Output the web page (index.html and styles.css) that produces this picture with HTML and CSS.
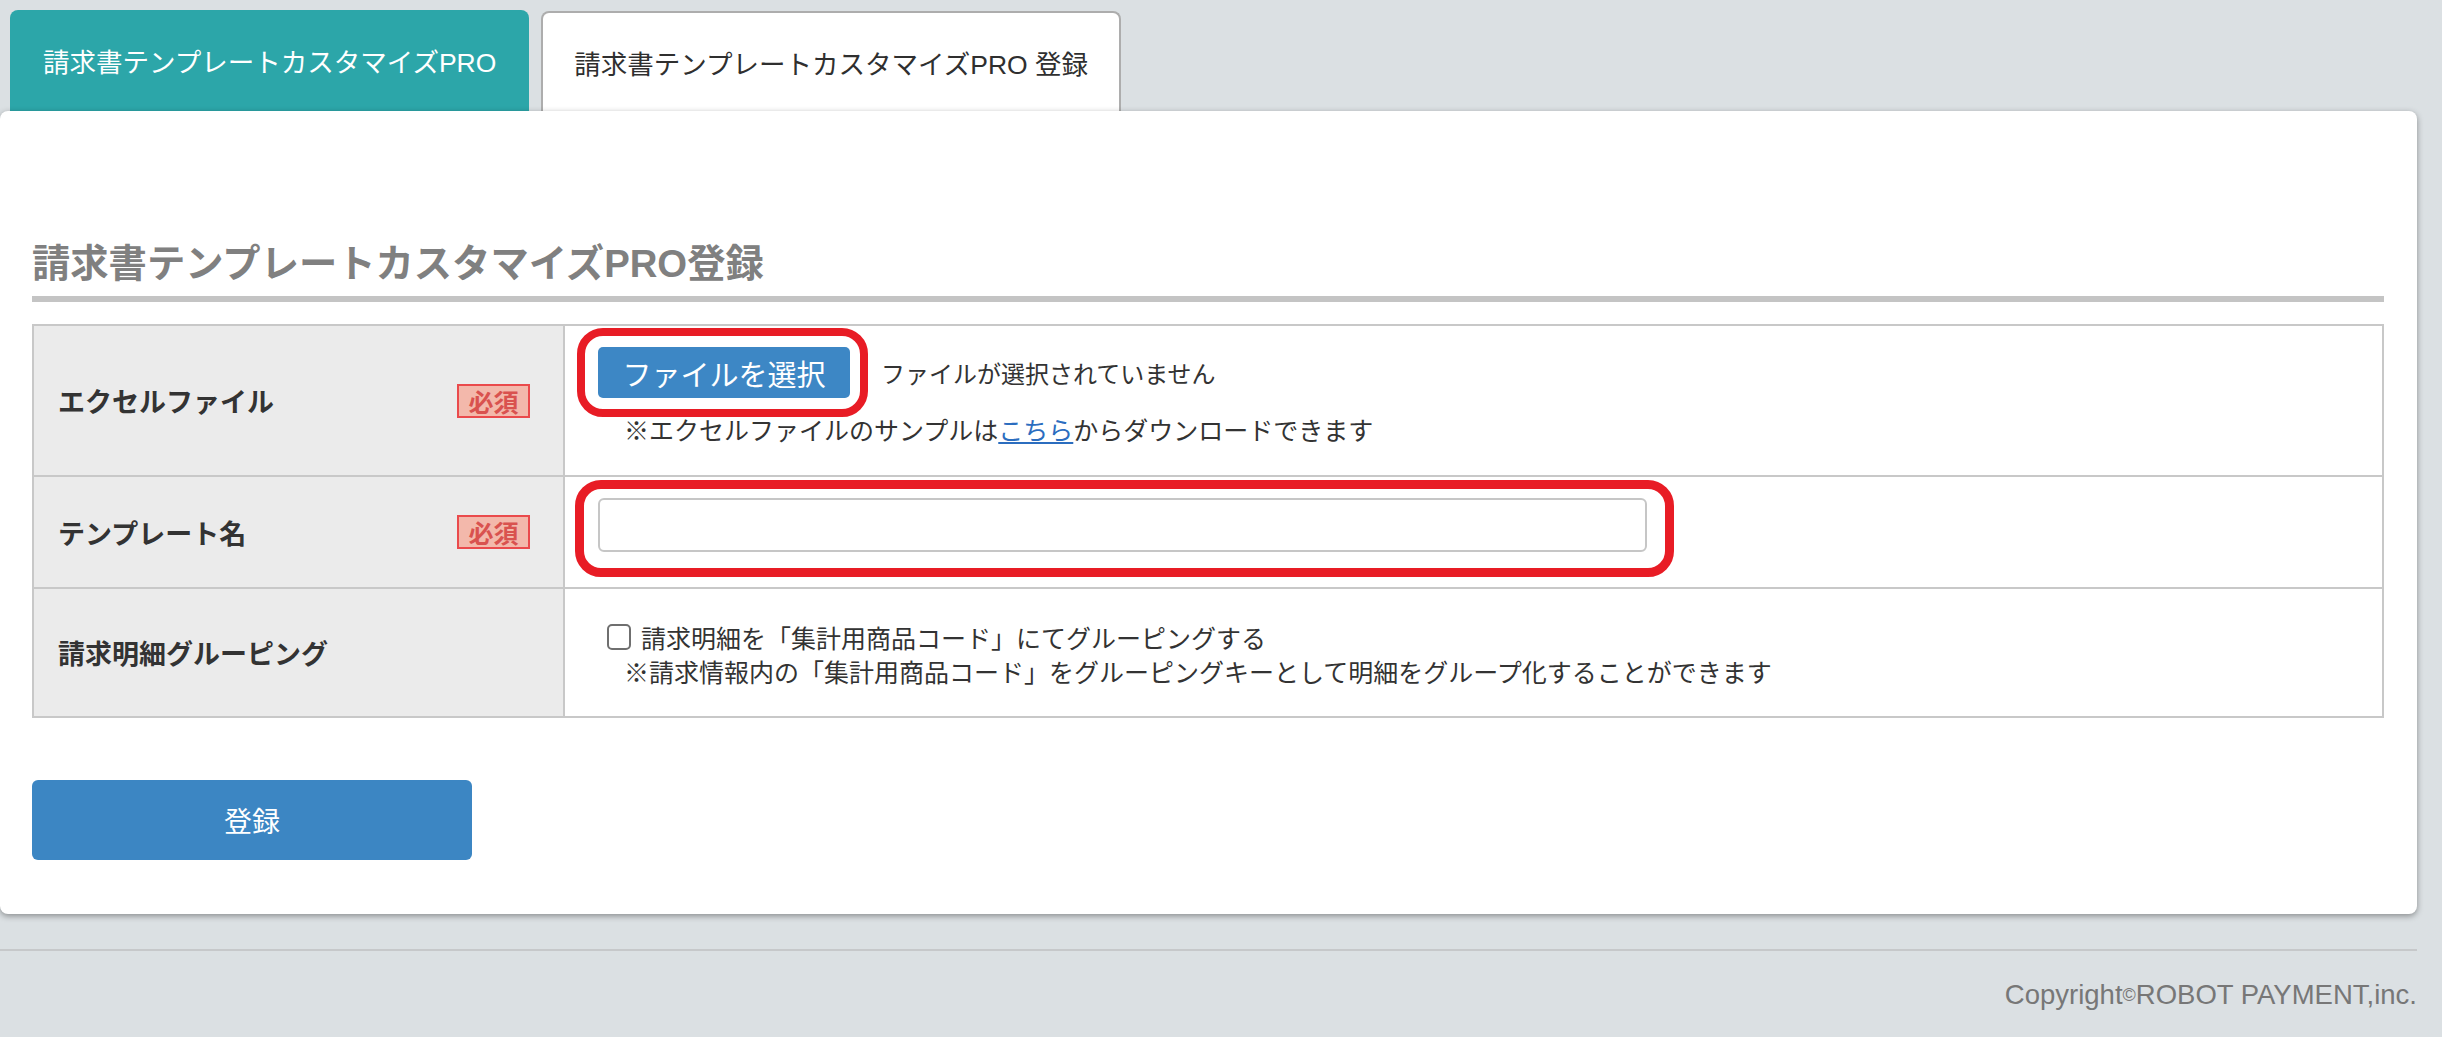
FILE: index.html
```html
<!DOCTYPE html>
<html lang="ja">
<head>
<meta charset="utf-8">
<title>請求書テンプレートカスタマイズPRO 登録</title>
<link rel="stylesheet" href="styles.css">
</head>
<body>
<div class="page">
  <nav class="tabs">
    <a class="tab tab-link">請求書テンプレートカスタマイズPRO</a>
    <a class="tab tab-active">請求書テンプレートカスタマイズPRO 登録</a>
  </nav>
  <main class="panel">
    <h1 class="title">請求書テンプレートカスタマイズPRO登録</h1>
    <table class="form-table">
      <colgroup><col class="col-label"><col></colgroup>
      <tr class="row-file">
        <th><div class="label"><span>エクセルファイル</span><span class="req">必須</span></div></th>
        <td class="cell cell-file">
          <div class="file-line">
            <span class="hl hl-btn"><button class="file-btn" type="button">ファイルを選択</button></span>
            <span class="file-none">ファイルが選択されていません</span>
          </div>
          <p class="note">※エクセルファイルのサンプルは<a class="link" href="#">こちら</a>からダウンロードできます</p>
        </td>
      </tr>
      <tr class="row-name">
        <th><div class="label"><span>テンプレート名</span><span class="req">必須</span></div></th>
        <td class="cell cell-name">
          <span class="hl hl-input"><input class="text-input" type="text"></span>
        </td>
      </tr>
      <tr class="row-group">
        <th><div class="label"><span>請求明細グルーピング</span></div></th>
        <td class="cell cell-group">
          <label class="check-line"><input class="check" type="checkbox"><span>請求明細を「集計用商品コード」にてグルーピングする</span></label>
          <p class="note note-group">※請求情報内の「集計用商品コード」をグルーピングキーとして明細をグループ化することができます</p>
        </td>
      </tr>
    </table>
    <button class="submit" type="button">登録</button>
  </main>
  <footer class="footer">
    <p class="copyright">Copyright<span class="copy-mark">©</span>ROBOT PAYMENT,inc.</p>
  </footer>
</div>
</body>
</html>
```
FILE: styles.css
```css
html, body {
  margin: 0;
  padding: 0;
}
body {
  background: #dbe0e3;
  font-family: "Liberation Sans", "Noto Sans CJK JP", sans-serif;
  color: #333;
  overflow: hidden;
}
.page {
  width: 2417px;
}
.tabs {
  display: flex;
  align-items: flex-end;
  gap: 12px;
  padding: 10px 0 0 10px;
  height: 101px;
}
.tab {
  box-sizing: border-box;
  display: flex;
  align-items: center;
  padding: 0 33px;
  font-size: 26.5px;
  text-decoration: none;
  border-radius: 8px 8px 0 0;
  white-space: nowrap;
}
.tab-link {
  height: 101px;
  background: #2ca6a9;
  color: #fff;
}
.tab-active {
  height: 100px;
  background: #fff;
  color: #2f2f2f;
  border: 2px solid #adadad;
  border-bottom: none;
  padding: 0 31px;
}
.panel {
  position: relative;
  display: block;
  background: #fff;
  border-radius: 8px;
  box-shadow: 0 2px 6px rgba(0, 0, 0, 0.38);
  padding: 131px 33px 54px 32px;
}
.title {
  margin: 0;
  font-size: 38.3px;
  line-height: 44px;
  font-weight: bold;
  color: #808080;
  padding-bottom: 10px;
  border-bottom: 6px solid #c4c4c4;
}
.form-table {
  margin-top: 22px;
  width: 100%;
  border-collapse: collapse;
  table-layout: fixed;
  border: 2px solid #c8c8c8;
}
.col-label {
  width: 531px;
}
.form-table th,
.form-table td {
  border: 2px solid #c8c8c8;
  padding: 0;
}
.form-table th {
  background: #ebebeb;
  text-align: left;
  vertical-align: middle;
  font-size: 27px;
  font-weight: bold;
  color: #333;
}
.label {
  display: flex;
  align-items: center;
  justify-content: space-between;
  padding: 0 33px 0 24px;
}
.req {
  box-sizing: border-box;
  width: 73px;
  height: 34px;
  display: flex;
  align-items: center;
  justify-content: center;
  background: #f3b8ab;
  border: 2px solid #ea4a4c;
  color: #d9524f;
  font-size: 25px;
  font-weight: bold;
}
.row-file { height: 151px; }
.row-name { height: 112px; }
.row-group { height: 129px; }
.form-table .cell {
  vertical-align: top;
  padding-left: 33px;
  font-size: 25px;
  color: #333;
}
.form-table .cell-file { padding-top: 21px; }
.form-table .cell-name { padding-top: 21px; }
.form-table .cell-group { padding-top: 30px; }
.file-line {
  display: flex;
  align-items: center;
  height: 51px;
}
.hl {
  position: relative;
  display: inline-block;
}
.hl::after {
  content: "";
  position: absolute;
  border: 9px solid #e81c25;
  border-radius: 26px;
  pointer-events: none;
}
.hl-btn::after {
  top: -19px;
  right: -18px;
  bottom: -19px;
  left: -21px;
  border-width: 8px;
}
.hl-input::after {
  top: -18px;
  right: -27px;
  bottom: -25px;
  left: -23px;
}
.file-btn {
  display: block;
  box-sizing: border-box;
  width: 252px;
  height: 51px;
  border: none;
  border-radius: 5px;
  background: #3d87c5;
  color: #fff;
  font-family: "Liberation Sans", "Noto Sans CJK JP", sans-serif;
  font-size: 29px;
  padding: 0;
}
.file-none {
  margin-left: 31px;
  font-size: 24px;
}
.note {
  margin: 15px 0 0 26px;
  line-height: 36px;
  font-size: 25px;
}
.link {
  color: #2b6dbf;
  text-decoration: underline;
}
.text-input {
  display: block;
  box-sizing: border-box;
  width: 1049px;
  height: 54px;
  border: 2px solid #c6c6c6;
  border-radius: 6px;
  background: #fff;
  margin: 0;
}
.check-line {
  display: flex;
  align-items: center;
  height: 36px;
  margin-left: 9px;
}
.check {
  appearance: none;
  -webkit-appearance: none;
  box-sizing: border-box;
  width: 24px;
  height: 26px;
  margin: 0 10px 0 0;
  border: 2px solid #6f6f6f;
  border-radius: 5px;
  background: #fff;
}
.note-group {
  margin-top: 0;
}
.submit {
  display: block;
  margin-top: 62px;
  width: 440px;
  height: 80px;
  border: none;
  border-radius: 6px;
  background: #3c86c3;
  color: #fff;
  font-family: "Liberation Sans", "Noto Sans CJK JP", sans-serif;
  font-size: 28px;
  padding: 0;
}
.footer {
  margin-top: 35px;
  border-top: 2px solid #c6c8ca;
}
.copyright {
  margin: 28px 0 0;
  text-align: right;
  font-size: 27.5px;
  line-height: 32px;
  color: #777;
}
.copy-mark {
  font-size: 18px;
  vertical-align: 3px;
}
```
